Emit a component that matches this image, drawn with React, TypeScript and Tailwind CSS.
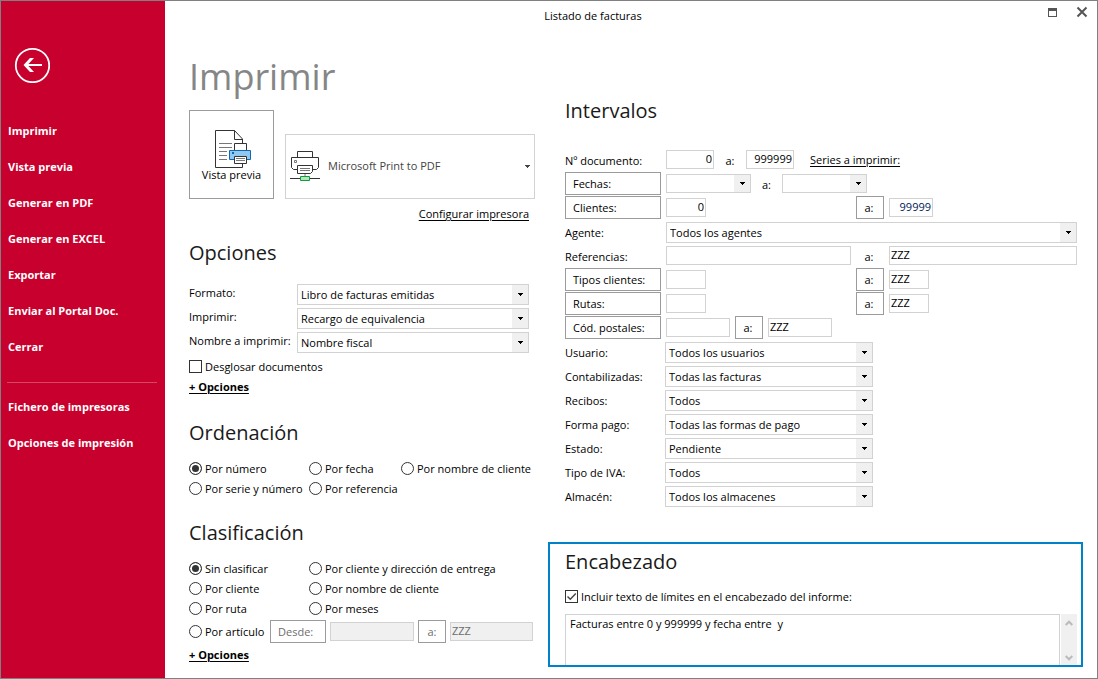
import React, { useId } from "react";

const FIELD = "h-[19px] border border-[#d2d2d2] bg-white px-px pb-0.5 text-[11px] leading-[15px] outline-none";
const BUTTON = "h-[23px] border border-[#9b9b9b] bg-white text-[11px] leading-[21px]";

function Arrow() {
  return (
    <svg width="5" height="3" viewBox="0 0 5 3" fill="currentColor" shapeRendering="crispEdges" aria-hidden="true">
      <path d="M0 0h5v1H4v1H3v1H2V2H1V1H0z" />
    </svg>
  );
}

function Select({ id, label, value, className = "", height = "h-[21px]" }: {
  id?: string; label?: string; value: string; className?: string; height?: string;
}) {
  return (
    <div className={`grid shrink-0 grid-cols-1 grid-rows-1 border border-[#d2d2d2] ${height} ${className}`}>
      <select id={id} aria-label={label} className="col-start-1 row-start-1 min-w-0 appearance-none bg-white pl-[3px] pr-5 text-[11px] leading-[19px] outline-none">
        <option>{value}</option>
      </select>
      <span className="pointer-events-none col-start-1 row-start-1 flex w-4 items-center justify-center justify-self-end bg-[#f0f0f0]">
        <Arrow />
      </span>
    </div>
  );
}

function Radio({ name, label, checked }: { name: string; label: string; checked?: boolean }) {
  return (
    <label className="flex h-5 items-start gap-[3px] whitespace-nowrap leading-5">
      <input
        type="radio"
        name={name}
        defaultChecked={checked}
        className="mt-[3px] size-[13px] shrink-0 appearance-none rounded-full border border-[#333] bg-white checked:bg-[#333] checked:shadow-[inset_0_0_0_2px_white]"
      />
      {label}
    </label>
  );
}

function Checkbox({ label, checked }: { label: string; checked?: boolean }) {
  return (
    <label className="flex h-5 items-start gap-[3px] whitespace-nowrap leading-5">
      <span className="mt-[3px] grid size-[13px] shrink-0">
        <input type="checkbox" defaultChecked={checked} className="peer col-start-1 row-start-1 size-[13px] appearance-none border border-[#333] bg-white" />
        <svg viewBox="0 0 13 13" className="pointer-events-none invisible col-start-1 row-start-1 size-[13px] peer-checked:visible" fill="none" stroke="#444" strokeWidth="1.4">
          <path d="M2.500 6.500l2.800 2.800L10.800 3.600" />
        </svg>
      </span>
      {label}
    </label>
  );
}

function Heading({ children }: { children: React.ReactNode }) {
  return <h2 className="h-9 text-[20px] leading-9 text-[#1a1a1a]">{children}</h2>;
}

function MoreOptions() {
  return <a href="#opciones" className="block h-5 self-start font-bold leading-5 underline underline-offset-2">+ Opciones</a>;
}

function OptionRow({ label, value }: { label: string; value: string }) {
  const id = useId();
  return (
    <div className="flex h-6 items-start">
      <label htmlFor={id} className="w-[108px] shrink-0 whitespace-nowrap leading-[22px]">{label}</label>
      <Select id={id} value={value} className="mt-0.5 w-[232px]" />
    </div>
  );
}

function RangeRow({ label, button, children }: { label: string; button?: boolean; children: React.ReactNode }) {
  return (
    <div className="flex h-6 items-start gap-[5px]">
      {button ? (
        <button type="button" className={`${BUTTON} w-24 shrink-0 pl-[7px] text-left`}>{label}</button>
      ) : (
        <span className="w-24 shrink-0 whitespace-nowrap leading-[26px]">{label}</span>
      )}
      {children}
    </div>
  );
}

function Field({ label, value = "", className = "" }: { label: string; value?: string; className?: string }) {
  return <input type="text" aria-label={label} defaultValue={value} className={`${FIELD} mt-0.5 min-w-0 ${className}`} />;
}

function FilterRow({ label, value }: { label: string; value: string }) {
  const id = useId();
  return (
    <div className="flex h-6 items-start">
      <label htmlFor={id} className="w-[100px] shrink-0 whitespace-nowrap leading-[26px]">{label}</label>
      <Select id={id} value={value} className="mt-0.5 w-[208px]" />
    </div>
  );
}

const MENU = ["Imprimir", "Vista previa", "Generar en PDF", "Generar en EXCEL", "Exportar", "Enviar al Portal Doc.", "Cerrar"];
const SETTINGS = ["Fichero de impresoras", "Opciones de impresión"];
const FILTERS: [string, string][] = [
  ["Usuario:", "Todos los usuarios"],
  ["Contabilizadas:", "Todas las facturas"],
  ["Recibos:", "Todos"],
  ["Forma pago:", "Todas las formas de pago"],
  ["Estado:", "Pendiente"],
  ["Tipo de IVA:", "Todos"],
  ["Almacén:", "Todos los almacenes"],
];

function Menu({ items }: { items: string[] }) {
  return (
    <ul>
      {items.map((item) => (
        <li key={item}>
          <a href="#menu" className="block h-9 pl-[7px] text-[11px] font-bold leading-9 text-white">{item}</a>
        </li>
      ))}
    </ul>
  );
}

function PreviewIcon() {
  return (
    <svg width="39" height="39" viewBox="-2 0 39 39" fill="none" aria-hidden="true">
      <path d="M20.500 1.500H1.500V38.500H28.500V10L20.500 1.500V10.500H28.500" fill="#fff" stroke="#333" />
      <path d="M5 14.500h13M5 18.500h13M5 22.500h8M5 26.500h8M5 30.500h8" stroke="#777" />
      <path d="M20.500 21V14.500H32.500V21" fill="#fff" stroke="#333" />
      <path d="M15.500 21.500H36.500V30.500H15.500z" fill="#91c8f0" stroke="#1068b5" />
      <path d="M18 23h2v2h-2z" fill="#1068b5" />
      <path d="M20.500 27.500H32.500V34.500H20.500z" fill="#fff" stroke="#333" />
      <path d="M22 29.500h9M22 31.500h9" stroke="#777" />
    </svg>
  );
}

function PrinterIcon() {
  return (
    <svg width="30" height="31" viewBox="0 0 30 31" fill="none" aria-hidden="true" className="shrink-0">
      <path d="M7.500 7V.5H22.500V7M7 18.500H3.500L1.500 16.500V6.500H28.500V16.500L26.500 18.500H23" stroke="#333" />
      <path d="M4.500 9.500h2v2h-2z" stroke="#777" />
      <path d="M7.500 14.500H22.500V20.500L20.500 22.500H7.500z" fill="#fff" stroke="#333" />
      <path d="M10 17.500h10M10 19.500h10" stroke="#777" />
      <path d="M15 23v3" stroke="#bbb" strokeWidth="2" />
      <path d="M0 27.500h30" stroke="#333" />
      <path d="M10.500 25.500h9v4h-9z" fill="#b5e3bd" stroke="#0f9d3c" />
    </svg>
  );
}

export default function App() {
  return (
    <div className="flex min-h-screen border border-[#808080] bg-white font-['Open_Sans','Noto_Sans',sans-serif] text-[11px] text-black">
      <nav className="w-[164px] shrink-0 bg-[#c8002d]">
        <button type="button" aria-label="Volver" className="ml-[13px] mt-[46px] block size-[36px]">
          <svg width="36" height="36" viewBox="0 0 36 36" fill="none" stroke="#fff">
            <circle cx="18.500" cy="18.500" r="16.700" strokeWidth="1.800" />
            <path d="M28 18H12" strokeWidth="2" />
            <path d="M20 11h-4L9.500 18l6.500 7h4L13.500 18z" fill="#fff" stroke="none" />
          </svg>
        </button>
        <div className="mt-[30px]"><Menu items={MENU} /></div>
        <hr className="mb-1.5 ml-1.5 mr-2 mt-[17px] border-t border-[#d64860]" />
        <Menu items={SETTINGS} />
      </nav>

      <div className="flex min-w-0 grow flex-col">
        <header className="flex h-8 shrink-0 items-start">
          <h1 className="grow text-center text-[11px] leading-[30px]">Listado de facturas</h1>
          <div className="flex w-[76px] justify-between pl-[26px] pr-[9px] pt-[5px] text-[#555]">
            <button type="button" aria-label="Maximizar">
              <svg width="11" height="12" viewBox="0 0 11 12" shapeRendering="crispEdges">
                <path d="M1 2h9v9H1zM2 5v5h7V5z" fill="currentColor" fillRule="evenodd" />
              </svg>
            </button>
            <button type="button" aria-label="Cerrar ventana">
              <svg width="12" height="12" viewBox="0 0 12 12" stroke="currentColor" strokeWidth="2" fill="none">
                <path d="M1.500 1.500l9 9M10.500 1.500l-9 9" />
              </svg>
            </button>
          </div>
        </header>

        <main className="flex grow">
          <div className="flex w-[383px] shrink-0 flex-col pl-6">
            <h2 className="mt-[15px] h-[62px] text-[36px] leading-[58px] text-[#868686]">Imprimir</h2>
            <div className="flex items-end gap-[11px]">
              <button type="button" className="flex h-[89px] w-[85px] shrink-0 flex-col items-center border border-[#9b9b9b] pt-[18px] text-[11px] leading-[14px]">
                <PreviewIcon />
                Vista previa
              </button>
              <button type="button" className="flex h-[65px] w-[250px] shrink-0 items-center gap-2 border border-[#d2d2d2] pl-1 pr-1 text-[11px] text-[#444]">
                <PrinterIcon />
                <span className="grow text-left">Microsoft Print to PDF</span>
                <Arrow />
              </button>
            </div>
            <a href="#configurar" className="mr-[19px] mt-[5px] h-5 self-end text-[11px] leading-5 underline underline-offset-2">Configurar impresora</a>

            <section className="mt-[11px] flex flex-col">
              <Heading>Opciones</Heading>
              <div className="mt-[11px]">
                <OptionRow label="Formato:" value="Libro de facturas emitidas" />
                <OptionRow label="Imprimir:" value="Recargo de equivalencia" />
                <OptionRow label="Nombre a imprimir:" value="Nombre fiscal" />
              </div>
              <div className="mt-[3px]"><Checkbox label="Desglosar documentos" /></div>
              <MoreOptions />
            </section>

            <section className="mt-[18px]">
              <Heading>Ordenación</Heading>
              <div className="mt-2 grid grid-cols-[120px_92px_1fr]">
                <Radio name="orden" label="Por número" checked />
                <Radio name="orden" label="Por fecha" />
                <Radio name="orden" label="Por nombre de cliente" />
                <Radio name="orden" label="Por serie y número" />
                <Radio name="orden" label="Por referencia" />
              </div>
            </section>

            <section className="mt-4 flex flex-col">
              <Heading>Clasificación</Heading>
              <div className="mt-2 grid grid-cols-[120px_1fr]">
                <Radio name="clase" label="Sin clasificar" checked />
                <Radio name="clase" label="Por cliente y dirección de entrega" />
                <Radio name="clase" label="Por cliente" />
                <Radio name="clase" label="Por nombre de cliente" />
                <Radio name="clase" label="Por ruta" />
                <Radio name="clase" label="Por meses" />
              </div>
              <div className="mt-px flex h-[23px] items-center gap-1">
                <div className="w-[77px] shrink-0"><Radio name="clase" label="Por artículo" /></div>
                <button type="button" disabled className={`${BUTTON} w-14 shrink-0 pl-[7px] text-left text-[#6d6d6d]`}>Desde:</button>
                <input type="text" aria-label="Artículo desde" disabled className="h-[19px] w-[84px] border border-[#d2d2d2] bg-[#f0f0f0]" />
                <button type="button" disabled className={`${BUTTON} w-7 shrink-0 text-[#6d6d6d]`}>a:</button>
                <input type="text" aria-label="Artículo hasta" disabled defaultValue="ZZZ" className="h-[19px] w-[83px] border border-[#d2d2d2] bg-[#f0f0f0] px-px pb-0.5 text-[11px] leading-[15px] text-[#6d6d6d]" />
              </div>
              <div className="mt-0.5 flex flex-col"><MoreOptions /></div>
            </section>
          </div>

          <div className="flex min-w-0 grow flex-col pb-[11px] pr-3.5">
            <section className="mt-[60px] pl-[17px] pr-1.5">
              <Heading>Intervalos</Heading>
              <div className="mt-[19px]">
                <RangeRow label="Nº documento:">
                  <Field label="Documento desde" value="0" className="w-12 text-right" />
                  <span className="w-[22px] text-center leading-[26px]">a:</span>
                  <Field label="Documento hasta" value="999999" className="w-12 text-right" />
                  <a href="#series" className="ml-[11px] leading-[23px] underline underline-offset-2">Series a imprimir:</a>
                </RangeRow>
                <RangeRow label="Fechas:" button>
                  <Select label="Fecha desde" value="" height="h-[19px]" className="mt-0.5 w-[85px]" />
                  <span className="w-[21px] text-center leading-[26px]">a:</span>
                  <Select label="Fecha hasta" value="" height="h-[19px]" className="mt-0.5 w-[85px]" />
                </RangeRow>
                <RangeRow label="Clientes:" button>
                  <div className="flex w-[185px] shrink-0"><Field label="Cliente desde" value="0" className="w-10 text-right" /></div>
                  <button type="button" className={`${BUTTON} w-7 shrink-0 pr-0.5`}>a:</button>
                  <Field label="Cliente hasta" value="99999" className="w-11 text-right text-[#00205a]" />
                </RangeRow>
                <RangeRow label="Agente:">
                  <Select label="Agente" value="Todos los agentes" className="mt-0.5 grow" />
                </RangeRow>
                <RangeRow label="Referencias:">
                  <Field label="Referencia desde" className="w-[185px] shrink-0" />
                  <span className="w-7 shrink-0 pr-0.5 text-center leading-[26px]">a:</span>
                  <Field label="Referencia hasta" value="ZZZ" className="grow" />
                </RangeRow>
                <RangeRow label="Tipos clientes:" button>
                  <div className="flex w-[185px] shrink-0"><Field label="Tipo de cliente desde" className="w-10" /></div>
                  <button type="button" className={`${BUTTON} w-7 shrink-0 pr-0.5`}>a:</button>
                  <Field label="Tipo de cliente hasta" value="ZZZ" className="w-10" />
                </RangeRow>
                <RangeRow label="Rutas:" button>
                  <div className="flex w-[185px] shrink-0"><Field label="Ruta desde" className="w-10" /></div>
                  <button type="button" className={`${BUTTON} w-7 shrink-0 pr-0.5`}>a:</button>
                  <Field label="Ruta hasta" value="ZZZ" className="w-10" />
                </RangeRow>
                <RangeRow label="Cód. postales:" button>
                  <Field label="Código postal desde" className="w-16" />
                  <button type="button" className={`${BUTTON} w-7 shrink-0 pr-0.5`}>a:</button>
                  <Field label="Código postal hasta" value="ZZZ" className="w-16" />
                </RangeRow>
                {FILTERS.map(([label, value]) => (
                  <FilterRow key={label} label={label} value={value} />
                ))}
              </div>
            </section>

            <section className="mt-[34px] flex grow flex-col border-2 border-[#0082c8] pl-[15px] pr-1">
              <Heading>Encabezado</Heading>
              <div className="mt-[7px]"><Checkbox label="Incluir texto de límites en el encabezado del informe:" checked /></div>
              <div className="mt-[7px] flex min-h-[51px] grow gap-px">
                <textarea
                  aria-label="Texto del encabezado"
                  defaultValue="Facturas entre 0 y 999999 y fecha entre  y"
                  className="grow resize-none border border-b-0 border-[#d2d2d2] px-1 text-[11px] leading-[17px] outline-none"
                />
                <div className="flex w-4 flex-col items-center justify-between bg-[#f0f0f0] pb-1 pt-1.5 text-[#bbb]">
                  <button type="button" aria-label="Subir">
                    <svg width="8" height="6" viewBox="0 0 8 6" fill="none" stroke="currentColor" strokeWidth="2" className="block"><path d="M.7 5L4 1.700 7.300 5" /></svg>
                  </button>
                  <button type="button" aria-label="Bajar">
                    <svg width="8" height="6" viewBox="0 0 8 6" fill="none" stroke="currentColor" strokeWidth="2" className="block"><path d="M.7 1L4 4.300 7.300 1" /></svg>
                  </button>
                </div>
              </div>
            </section>
          </div>
        </main>
      </div>
    </div>
  );
}
